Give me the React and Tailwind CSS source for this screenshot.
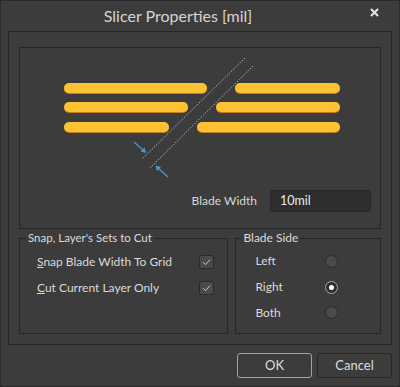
import React from "react";

const font = { fontFamily: "Lato, 'Liberation Sans', sans-serif" };

function Check() {
  return (
    <div className="w-[15px] h-[14px] rounded-[2px] bg-[#4a4a4a] border border-[#2a2a2a] flex items-center justify-center">
      <svg width="11" height="10" viewBox="0 0 11 10">
        <path d="M2 5.2 L4.4 7.6 L9 2.6" fill="none" stroke="#cfcfcf" strokeWidth="1" />
      </svg>
    </div>
  );
}

function Radio({ on }) {
  return on ? (
    <div className="w-[13px] h-[13px] rounded-full bg-[#2f2f2f] border border-[#a8a8a8] flex items-center justify-center">
      <div className="w-[5px] h-[5px] rounded-full bg-white" />
    </div>
  ) : (
    <div className="w-[13px] h-[13px] rounded-full bg-[#4a4a4a] border border-[#2b2b2b]" />
  );
}

function Bar({ x1, x2, y }) {
  return (
    <g>
      <rect x={x1} y={y + 1} width={x2 - x1} height={10} rx={5} fill="#c5801b" />
      <rect x={x1} y={y} width={x2 - x1} height={10} rx={5} fill="#fcc232" />
    </g>
  );
}

export default function App() {
  return (
    <div
      className="w-[400px] h-[387px] bg-[#3c3c3c] border border-[#2a2a2a] flex flex-col text-[12px] text-[#dadada]"
      style={font}
    >
      {/* title bar */}
      <div className="h-[30px] relative flex items-center justify-center pr-[44px]">
        <span className="text-[16px] text-[#d4d4d4] leading-none pb-[1px]">Slicer Properties [mil]</span>
        <svg className="absolute right-[20px] top-[7px]" width="9" height="9" viewBox="0 0 9 9">
          <path d="M1 1 L8 8 M8 1 L1 8" stroke="#e6e6e6" strokeWidth="2" />
        </svg>
      </div>

      {/* outer panel */}
      <div className="mx-[7px] h-[314px] border border-[#262626] px-[10px] pt-[15px] flex flex-col">
        {/* drawing area */}
        <div className="h-[182px] border border-[#262626] flex flex-col">
          <svg width="361" height="142" viewBox="20 48 361 142" className="block">
            <Bar x1={64} x2={207} y={83} />
            <Bar x1={235} x2={340} y={83} />
            <Bar x1={64} x2={188} y={102} />
            <Bar x1={216} x2={340} y={102} />
            <Bar x1={64} x2={169} y={122} />
            <Bar x1={197} x2={340} y={122} />
            <line x1="245" y1="58" x2="142" y2="159" stroke="#b4b4b4" strokeWidth="1" strokeDasharray="1.5 1.5" />
            <line x1="253" y1="66" x2="150" y2="168" stroke="#b4b4b4" strokeWidth="1" strokeDasharray="1.5 1.5" />
            <line x1="134" y1="142" x2="143" y2="150" stroke="#3d9fd6" strokeWidth="1.2" />
            <path d="M146 153 L140.5 151.5 L144.5 147.5 Z" fill="#3d9fd6" />
            <line x1="168" y1="177" x2="158" y2="168" stroke="#3d9fd6" strokeWidth="1.2" />
            <path d="M155.5 165.5 L161 167 L157 171 Z" fill="#3d9fd6" />
          </svg>
          <div className="h-[22px] flex items-center justify-end pr-[9px]">
            <span className="text-[12px] text-[#d8d8d8]">Blade Width</span>
            <div className="ml-[13px] w-[101px] h-[22px] rounded-[3px] bg-[#2e2e2e] border border-[#262626] flex items-center pl-[9px] text-[12.5px] text-[#ececec]">
              10mil
            </div>
          </div>
        </div>

        {/* groups */}
        <div className="flex gap-[7px] mt-[1px]">
          <fieldset className="w-[210px] h-[104px] border border-[#262626]">
            <legend className="ml-[6px] px-[2px] leading-[16px] text-[11.5px]">Snap, Layer's Sets to Cut</legend>
            <div className="flex flex-col pl-[17px] pr-[13px] pt-[3px]">
              <div className="h-[26px] flex items-center justify-between">
                <span><span className="underline">S</span>nap Blade Width To Grid</span>
                <Check />
              </div>
              <div className="h-[26px] flex items-center justify-between">
                <span><span className="underline">C</span>ut Current Layer Only</span>
                <Check />
              </div>
            </div>
          </fieldset>
          <fieldset className="w-[146px] h-[104px] border border-[#262626]">
            <legend className="ml-[5px] px-[2px] leading-[16px] text-[12px]">Blade Side</legend>
            <div className="flex flex-col pl-[19px] pt-[2px]">
              <div className="h-[26px] flex items-center">
                <span className="w-[70px]">Left</span>
                <Radio />
              </div>
              <div className="h-[26px] flex items-center">
                <span className="w-[70px]">Right</span>
                <Radio on />
              </div>
              <div className="h-[25px] flex items-center">
                <span className="w-[70px]">Both</span>
                <Radio />
              </div>
            </div>
          </fieldset>
        </div>
      </div>

      {/* buttons */}
      <div className="flex justify-end gap-[5px] pr-[7px] mt-[8px]">
        <button className="w-[75px] h-[25px] rounded-[3px] bg-[#3c3c3c] border border-[#8fa9c2] text-[13px] text-[#dcdcdc]">
          OK
        </button>
        <button className="w-[75px] h-[25px] rounded-[3px] bg-[#3c3c3c] border border-[#262626] text-[13px] text-[#dcdcdc]">
          Cancel
        </button>
      </div>
    </div>
  );
}
